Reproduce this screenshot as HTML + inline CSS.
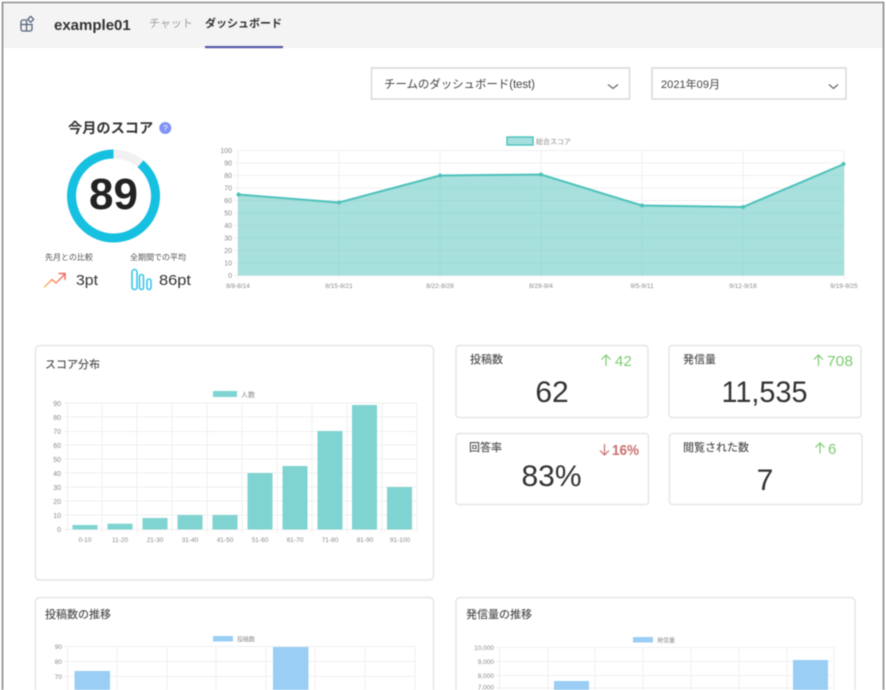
<!DOCTYPE html>
<html lang="ja">
<head>
<meta charset="utf-8">
<title>example01 ダッシュボード</title>
<style>
html,body{margin:0;padding:0;background:#fff;width:886px;height:690px;overflow:hidden}
svg{display:block;filter:blur(0.6px)}
text{font-family:"Liberation Sans","Noto Sans CJK JP",sans-serif}
.ax{font-size:7px;fill:#8a8a8a;text-anchor:end}
.xl{font-size:6.5px;fill:#8a8a8a;text-anchor:middle}
.g{stroke:#f0f0f0;stroke-width:1;fill:none}
.card{fill:#fff;stroke:#e6e6e6;stroke-width:1.5}
.t{font-size:11px;fill:#555;font-weight:500}
.num{font-size:30px;fill:#333;text-anchor:middle}
.up{font-size:15px;fill:#7ccb70}
</style>
</head>
<body>
<svg width="886" height="690" viewBox="0 0 886 690" xmlns="http://www.w3.org/2000/svg">
<rect width="886" height="690" fill="#fff"/>
<rect x="3" y="4" width="880" height="44" fill="#f4f4f4"/>
<path d="M2.5 690V2.5H883.5V690" fill="none" stroke="#8a8a8a" stroke-width="1.6"/>

<!-- header -->
<g fill="none" stroke="#56627a" stroke-width="1.3">
<path d="M26.5 20H23a2 2 0 0 0-2 2v7a2 2 0 0 0 2 2h7a2 2 0 0 0 2-2v-4.5H21M26.5 20V31"/>
<path d="M30.7 16.3l3 3-3 3-3-3z" stroke-linejoin="round"/>
</g>
<text x="54" y="30" font-size="15" font-weight="700" fill="#333">example01</text>
<text x="149" y="27" font-size="11" fill="#a0a0a0">チャット</text>
<text x="205" y="27" font-size="11" font-weight="700" fill="#333">ダッシュボード</text>
<rect x="205" y="46" width="78" height="2.2" fill="#5558a8"/>

<!-- selects -->
<rect x="371.5" y="68" width="258" height="31" fill="#fff" stroke="#d6d6d6" stroke-width="1.4"/>
<text x="384" y="88" font-size="11.5" fill="#444" textLength="151">チームのダッシュボード(test)</text>
<path d="M608 84.5l5 4 5-4" fill="none" stroke="#666" stroke-width="1.2"/>
<rect x="652" y="68" width="194" height="31" fill="#fff" stroke="#d6d6d6" stroke-width="1.4"/>
<text x="661" y="88" font-size="11" fill="#444" textLength="59">2021年09月</text>
<path d="M829 84.5l4.5 4 4.5-4" fill="none" stroke="#666" stroke-width="1.2"/>

<!-- score -->
<text x="68" y="133" font-size="14.2" font-weight="700" fill="#333">今月のスコア</text>
<circle cx="165.3" cy="128" r="6" fill="#8093f5"/>
<text x="165.3" y="131" font-size="8" fill="#fff" text-anchor="middle">?</text>
<circle cx="113.5" cy="196" r="42" fill="none" stroke="#f1f1f1" stroke-width="9"/>
<path d="M140.5 163.8A42 42 0 1 1 113.5 154" fill="none" stroke="#16c0e0" stroke-width="9"/>
<text x="113.5" y="209" font-size="44" font-weight="700" fill="#222" text-anchor="middle">89</text>
<text x="45" y="260" font-size="8" fill="#555">先月との比較</text>
<text x="130" y="260" font-size="8" fill="#555">全期間での平均</text>
<defs>
<linearGradient id="ar" x1="0" y1="1" x2="1" y2="0"><stop offset="0" stop-color="#fbc06a"/><stop offset="1" stop-color="#f0655f"/></linearGradient>
</defs>
<path d="M44 287.5L52 279.5L56 283L64.5 274.5M58.5 273.5H65V280" fill="none" stroke="url(#ar)" stroke-width="1.5"/>
<text x="76" y="285" font-size="15" fill="#333" textLength="22" lengthAdjust="spacingAndGlyphs">3pt</text>
<g fill="none" stroke="#3cc6e6" stroke-width="1.6">
<rect x="132" y="269.5" width="5" height="20" rx="2.5"/>
<rect x="139.5" y="274.5" width="4" height="15" rx="2"/>
<rect x="147" y="279" width="4" height="10.5" rx="2"/>
</g>
<text x="159" y="285" font-size="15" fill="#333" textLength="32" lengthAdjust="spacingAndGlyphs">86pt</text>

<!-- line chart -->
<rect x="507" y="137" width="26" height="8" fill="#a6dfdd" stroke="#4fc1bc" stroke-width="1.4"/>
<text x="536" y="144" font-size="7" fill="#8a8a8a">総合スコア</text>
<path class="g" d="M238 150.5H844M234 163H844M234 175.5H844M234 188H844M234 200.5H844M234 213H844M234 225.5H844M234 238H844M234 250.5H844M234 263H844M234 275.5H844M238 150.5V279M339 150.5V279M440 150.5V279M541 150.5V279M642 150.5V279M743 150.5V279M844 150.5V279"/>
<path d="M238 194.5L339 202.5L440 175.5L541 174.5L642 205.5L743 207L844 164V275.5H238Z" fill="#4fc1bc" fill-opacity=".5"/>
<path d="M238 194.5L339 202.5L440 175.5L541 174.5L642 205.5L743 207L844 164" fill="none" stroke="#4fc1bc" stroke-width="2"/>
<g fill="#4fc1bc">
<circle cx="238.5" cy="194.5" r="2"/><circle cx="339" cy="202.5" r="2"/><circle cx="440" cy="175.5" r="2"/><circle cx="541" cy="174.5" r="2"/><circle cx="642" cy="205.5" r="2"/><circle cx="743" cy="207" r="2"/><circle cx="843.5" cy="164" r="2"/>
</g>
<text class="ax" x="232" y="153">100</text><text class="ax" x="232" y="165.5">90</text><text class="ax" x="232" y="178">80</text><text class="ax" x="232" y="190.5">70</text><text class="ax" x="232" y="203">60</text><text class="ax" x="232" y="215.5">50</text><text class="ax" x="232" y="228">40</text><text class="ax" x="232" y="240.5">30</text><text class="ax" x="232" y="253">20</text><text class="ax" x="232" y="265.5">10</text><text class="ax" x="232" y="278">0</text>
<text class="xl" x="238" y="288">8/8-8/14</text><text class="xl" x="339" y="288">8/15-8/21</text><text class="xl" x="440" y="288">8/22-8/28</text><text class="xl" x="541" y="288">8/29-9/4</text><text class="xl" x="642" y="288">9/5-9/11</text><text class="xl" x="743" y="288">9/12-9/18</text><text class="xl" x="844" y="288">9/19-9/25</text>

<!-- score distribution -->
<rect class="card" x="35.5" y="345.5" width="398" height="234.5" rx="4"/>
<text class="t" x="45" y="368">スコア分布</text>
<rect x="213" y="391" width="24" height="6" fill="#7fd3d1"/>
<text x="241" y="397" font-size="7" fill="#8a8a8a">人数</text>
<path class="g" d="M64 403H417M64 417H417M64 431.5H417M64 445H417M64 459H417M64 473H417M64 487H417M64 501H417M64 515H417M64 529.5H417M67.5 403V533M102 403V533M137 403V533M172 403V533M207 403V533M242 403V533M277 403V533M312 403V533M347 403V533M382 403V533M417 403V533"/>
<g fill="#7fd3d1">
<rect x="72.5" y="525" width="25" height="4.5"/><rect x="107.5" y="523.7" width="25" height="5.8"/><rect x="142.5" y="518" width="25" height="11.5"/><rect x="177.5" y="515" width="25" height="14.5"/><rect x="212.5" y="515" width="25" height="14.5"/><rect x="247.5" y="473" width="25" height="56.5"/><rect x="282.5" y="466" width="25" height="63.5"/><rect x="317.5" y="431" width="25" height="98.5"/><rect x="352" y="405" width="25" height="124.5"/><rect x="387" y="487" width="25" height="42.5"/>
</g>
<text class="ax" x="61" y="406">90</text><text class="ax" x="61" y="420">80</text><text class="ax" x="61" y="434">70</text><text class="ax" x="61" y="448">60</text><text class="ax" x="61" y="462">50</text><text class="ax" x="61" y="476">40</text><text class="ax" x="61" y="490">30</text><text class="ax" x="61" y="504">20</text><text class="ax" x="61" y="518">10</text><text class="ax" x="61" y="532">0</text>
<text class="xl" x="85" y="542">0-10</text><text class="xl" x="120" y="542">11-20</text><text class="xl" x="155" y="542">21-30</text><text class="xl" x="190" y="542">31-40</text><text class="xl" x="225" y="542">41-50</text><text class="xl" x="260" y="542">51-60</text><text class="xl" x="295" y="542">61-70</text><text class="xl" x="330" y="542">71-80</text><text class="xl" x="365" y="542">81-90</text><text class="xl" x="400" y="542">91-100</text>

<!-- stat cards -->
<rect class="card" x="456" y="345.5" width="192" height="72" rx="3"/>
<rect class="card" x="669" y="345.5" width="192" height="72" rx="3"/>
<rect class="card" x="456" y="433.5" width="192.5" height="71" rx="3"/>
<rect class="card" x="669.5" y="433.5" width="192.5" height="71" rx="3"/>

<text class="t" x="470" y="363">投稿数</text>
<path d="M606 366V355M601.5 359.5L606 355L610.5 359.5" fill="none" stroke="#7ccb70" stroke-width="1.2"/>
<text class="up" x="615" y="366">42</text>
<text class="num" x="552" y="402">62</text>

<text class="t" x="683" y="363">発信量</text>
<path d="M818.5 366V355M814 359.5L818.5 355L823 359.5" fill="none" stroke="#7ccb70" stroke-width="1.2"/>
<text class="up" x="827" y="366" textLength="26" lengthAdjust="spacingAndGlyphs">708</text>
<text class="num" x="764.5" y="402" textLength="86" lengthAdjust="spacingAndGlyphs">11,535</text>

<text class="t" x="469" y="451">回答率</text>
<path d="M604.5 444V455M600 450.5L604.5 455L609 450.5" fill="none" stroke="#cb6f6f" stroke-width="1.2"/>
<text x="612" y="455" font-size="14.5" fill="#cb6f6f" font-weight="700" textLength="27" lengthAdjust="spacingAndGlyphs">16%</text>
<text class="num" x="551.5" y="486">83%</text>

<text class="t" x="683" y="451">閲覧された数</text>
<path d="M820 453.5V443M815.5 447.5L820 443L824.5 447.5" fill="none" stroke="#7ccb70" stroke-width="1.2"/>
<text class="up" x="828" y="454">6</text>
<text class="num" x="765" y="490">7</text>

<!-- bottom left -->
<rect class="card" x="35.5" y="597.5" width="398" height="110" rx="4"/>
<text class="t" x="45" y="618">投稿数の推移</text>
<rect x="213" y="636" width="20" height="5.5" fill="#9acef5"/>
<text x="237" y="641.5" font-size="6" fill="#8a8a8a">投稿数</text>
<path class="g" d="M64 646.5H415M64 661.5H415M64 676.5H415M67.5 646.5V690M117 646.5V690M167 646.5V690M216 646.5V690M266 646.5V690M315 646.5V690M365 646.5V690M415 646.5V690"/>
<rect x="74.5" y="671" width="35.5" height="19" fill="#9acef5"/>
<rect x="273" y="647" width="35.5" height="43" fill="#9acef5"/>
<text class="ax" x="62" y="649" style="font-size:6.5px">90</text><text class="ax" x="62" y="664" style="font-size:6.5px">80</text><text class="ax" x="62" y="679" style="font-size:6.5px">70</text>

<!-- bottom right -->
<rect class="card" x="456" y="597.5" width="399" height="110" rx="4"/>
<text class="t" x="466" y="618">発信量の推移</text>
<rect x="633" y="637" width="20" height="5.5" fill="#9acef5"/>
<text x="657" y="642.5" font-size="6" fill="#8a8a8a">発信量</text>
<path class="g" d="M496 647.5H834M496 661.5H834M496 675.5H834M496 688H834M499.5 647.5V690M548 647.5V690M595 647.5V690M643 647.5V690M691 647.5V690M739 647.5V690M787 647.5V690M834 647.5V690"/>
<rect x="554" y="681" width="35" height="9" fill="#9acef5"/>
<rect x="793" y="660" width="35" height="30" fill="#9acef5"/>
<text class="ax" x="494" y="650" style="font-size:6.5px">10,000</text><text class="ax" x="494" y="664" style="font-size:6.5px">9,000</text><text class="ax" x="494" y="678" style="font-size:6.5px">8,000</text><text class="ax" x="494" y="689.5" style="font-size:6.5px">7,000</text>
</svg>
</body>
</html>
